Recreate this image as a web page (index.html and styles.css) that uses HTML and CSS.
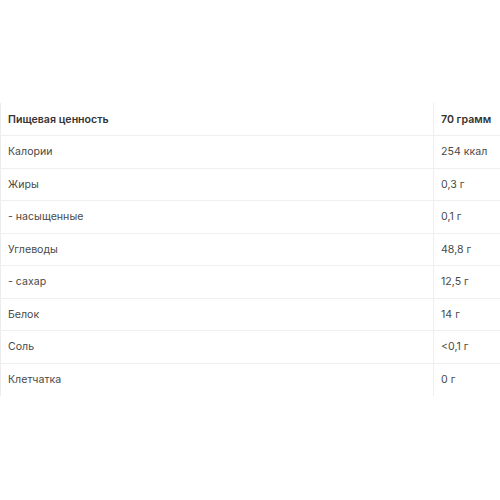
FILE: index.html
```html
<!DOCTYPE html>
<html lang="ru">
<head>
<meta charset="utf-8">
<link rel="stylesheet" href="styles.css">
</head>
<body>
<table class="nutrition">
  <thead>
    <tr><th>Пищевая ценность</th><th>70 грамм</th></tr>
  </thead>
  <tbody>
    <tr><td>Калории</td><td>254 ккал</td></tr>
    <tr><td>Жиры</td><td>0,3 г</td></tr>
    <tr><td>- насыщенные</td><td>0,1 г</td></tr>
    <tr><td>Углеводы</td><td>48,8 г</td></tr>
    <tr><td>- сахар</td><td>12,5 г</td></tr>
    <tr><td>Белок</td><td>14 г</td></tr>
    <tr><td>Соль</td><td>&lt;0,1 г</td></tr>
    <tr><td>Клетчатка</td><td>0 г</td></tr>
  </tbody>
</table>
</body>
</html>
```
FILE: styles.css
```css
html, body {
  margin: 0;
  padding: 0;
  background: #fff;
}
body {
  padding-top: 103px;
  font-family: Inter, "Noto Sans", sans-serif;
  font-size: 10.6px;
  color: #4a4a4a;
}
.nutrition {
  border-collapse: collapse;
  width: 520px;
  table-layout: fixed;
}
.nutrition th,
.nutrition td {
  height: 32.5px;
  padding: 0 8px 0 7px;
  text-align: left;
  vertical-align: middle;
  box-sizing: border-box;
  border-bottom: 1px solid #efefef;
}
.nutrition th {
  font-weight: 600;
  color: #333;
}
.nutrition tr > :first-child {
  width: 433px;
  border-left: 1px solid #ececec;
  border-right: 1px solid #efefef;
}
.nutrition tbody tr:last-child td {
  border-bottom: none;
}
```
